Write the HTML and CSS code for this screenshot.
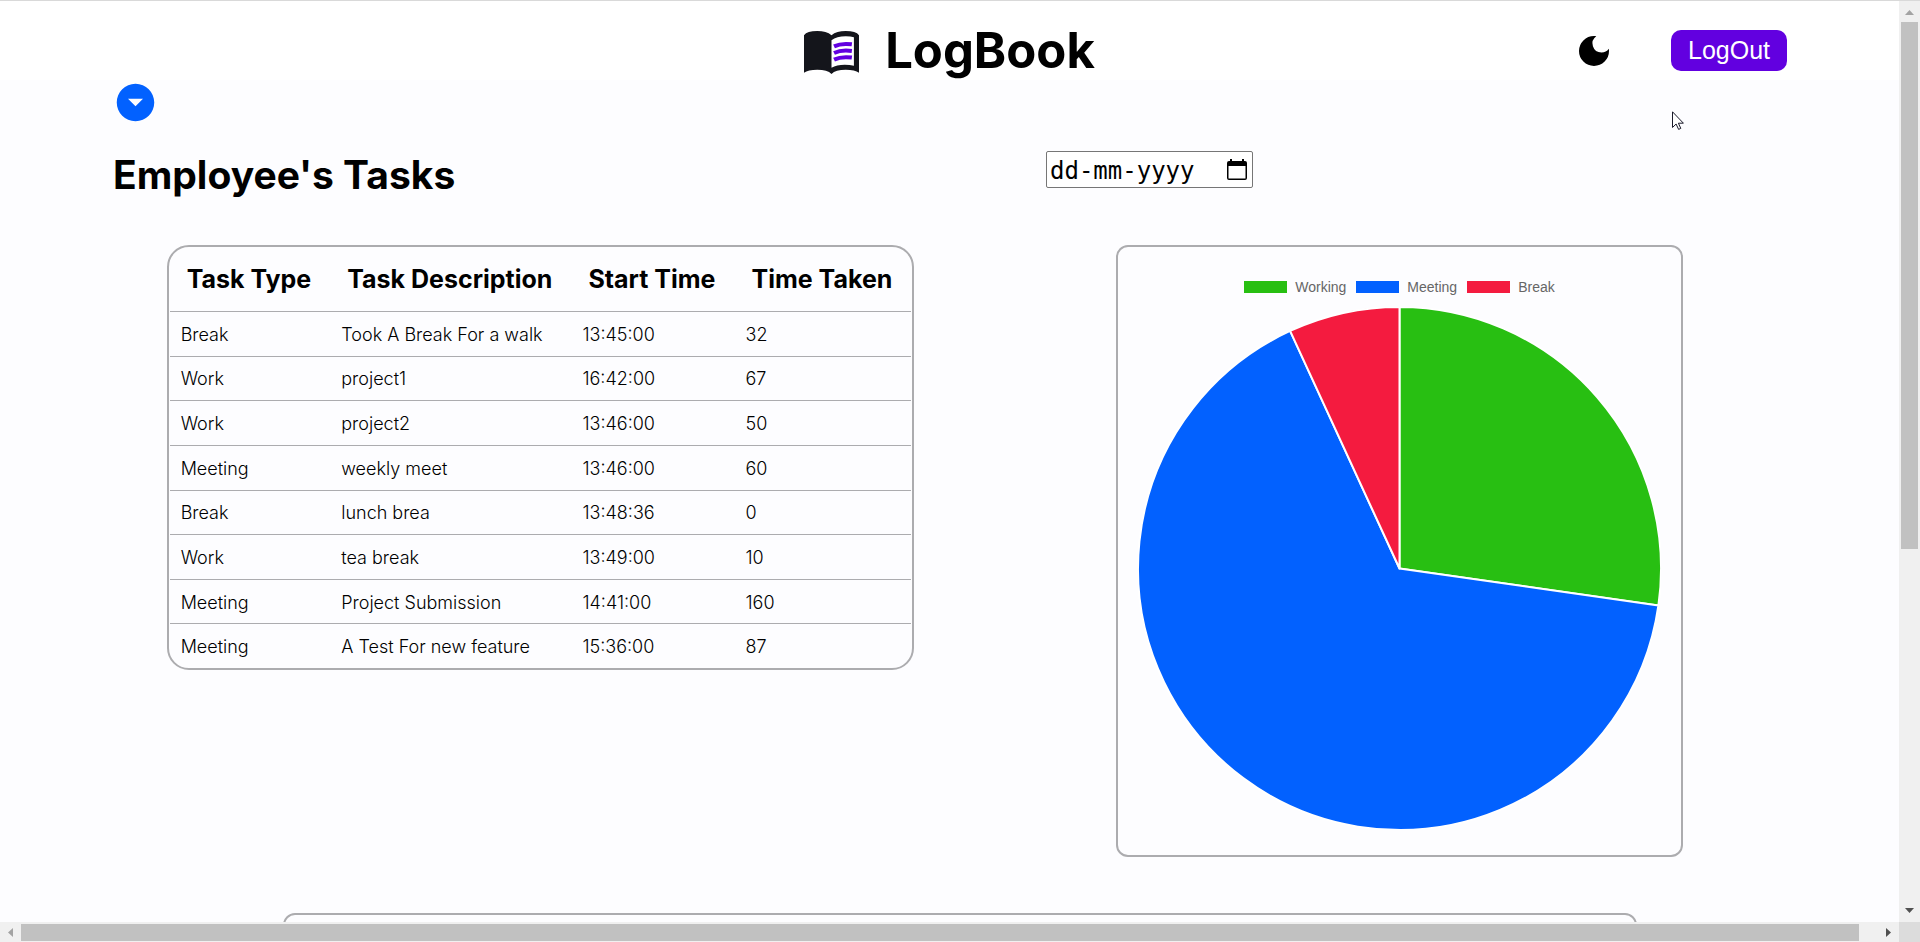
FILE: index.html
```html
<!DOCTYPE html>
<html lang="en">
<head>
<meta charset="utf-8">
<title>LogBook</title>
<link rel="stylesheet" href="styles.css">
</head>
<body>
<div class="window">
  <div class="viewport">
    <header class="topbar">
      <div class="brand">
        <svg class="brand-icon" viewBox="0 0 54 42" aria-hidden="true">
          <path fill="#14151b" d="M0 4Q3 0 13 0q9 0 14 4Q32 0 41 0q10 0 13 4v37Q50 38 41 38q-10 0-14 4-4-4-14-4-9 0-13 3z"/>
          <path fill="#fff" d="M27 9Q32 5 41 5q5 0 8 1v28q-4-1-9-1-8 0-13 3z"/>
          <path fill="none" stroke="#6200e0" stroke-width="4" d="M29.500 15q7-3.400 17.500-2M29.500 21.500q7-3.400 17.500-2M29.500 28q7-3.400 17.500-2"/>
        </svg>
        <h1 class="brand-name">LogBook</h1>
      </div>
      <div class="actions">
        <button class="icon-button" type="button" aria-label="Dark mode">
          <svg class="moon" viewBox="0 0 24 24" aria-hidden="true"><path d="M12 3a9 9 0 1 0 9 9c0-.46-.04-.92-.1-1.360a5.389 5.389 0 0 1-4.400 2.260 5.403 5.403 0 0 1-3.140-9.800c-.44-.06-.9-.1-1.360-.1z"/></svg>
        </button>
        <button class="logout" type="button">LogOut</button>
      </div>
    </header>
    <main class="page">
      <button class="icon-button expand" type="button" aria-label="Expand">
        <svg class="expand-icon" viewBox="0 0 24 24" aria-hidden="true"><path d="M12 2C6.480 2 2 6.480 2 12s4.480 10 10 10 10-4.480 10-10S17.520 2 12 2zm0 12l-4-4h8l-4 4z"/></svg>
      </button>
      <div class="columns title-row">
        <h2 class="title">Employee's Tasks</h2>
        <div class="date-field">
          <input class="date-input" type="text" placeholder="dd-mm-yyyy" aria-label="Date">
          <svg class="calendar" viewBox="0 0 20 21" aria-hidden="true"><path fill-rule="evenodd" d="M2 2h1V0h2v2h10V0h2v2h1q2 0 2 2v15q0 2-2 2H2q-2 0-2-2V4q0-2 2-2zm-.5 5v12.500h17V7z"/></svg>
        </div>
      </div>
      <div class="columns">
        <div class="table-card">
          <table class="tasks">
            <thead><tr><th>Task Type</th><th>Task Description</th><th>Start Time</th><th>Time Taken</th></tr></thead>
            <tbody>
              <tr><td>Break</td><td>Took A Break For a walk</td><td>13:45:00</td><td>32</td></tr>
              <tr><td>Work</td><td>project1</td><td>16:42:00</td><td>67</td></tr>
              <tr><td>Work</td><td>project2</td><td>13:46:00</td><td>50</td></tr>
              <tr><td>Meeting</td><td>weekly meet</td><td>13:46:00</td><td>60</td></tr>
              <tr><td>Break</td><td>lunch brea</td><td>13:48:36</td><td>0</td></tr>
              <tr><td>Work</td><td>tea break</td><td>13:49:00</td><td>10</td></tr>
              <tr><td>Meeting</td><td>Project Submission</td><td>14:41:00</td><td>160</td></tr>
              <tr><td>Meeting</td><td>A Test For new feature</td><td>15:36:00</td><td>87</td></tr>
            </tbody>
          </table>
        </div>
        <div class="chart-card">
          <ul class="legend">
            <li class="legend-item"><span class="swatch working"></span>Working</li>
            <li class="legend-item"><span class="swatch meeting"></span>Meeting</li>
            <li class="legend-item"><span class="swatch break"></span>Break</li>
          </ul>
          <svg class="pie" viewBox="0 0 524 524" role="img" aria-label="Time by task type">
            <g stroke="#fff" stroke-width="2" stroke-linejoin="round">
              <path fill="#28bf12" d="M262 262V0A262 262 0 0 1 521.400 299z"/>
              <path fill="#0261ff" d="M262 262L521.400 299A262 262 0 1 1 152.400 24z"/>
              <path fill="#f41b3f" d="M262 262L152.400 24A262 262 0 0 1 262 0z"/>
            </g>
          </svg>
        </div>
      </div>
      <section class="next-card"></section>
    </main>
  </div>
  <div class="scroll-y" aria-hidden="true">
    <svg class="arrow" viewBox="0 0 9 5"><path fill="#a3a3a3" d="M0 5h9L4.500 0z"/></svg>
    <div class="track-y"><div class="thumb-y"></div></div>
    <svg class="arrow" viewBox="0 0 9 5"><path fill="#505050" d="M0 0h9L4.500 5z"/></svg>
  </div>
  <div class="scroll-x" aria-hidden="true">
    <svg class="arrow-x" viewBox="0 0 5 9"><path fill="#a3a3a3" d="M5 0v9L0 4.500z"/></svg>
    <div class="track-x"><div class="thumb-x"></div></div>
    <svg class="arrow-x" viewBox="0 0 5 9"><path fill="#505050" d="M0 0v9l5-4.500z"/></svg>
  </div>
  <div class="corner"></div>
</div>
<svg class="pointer" viewBox="0 0 12 19" aria-hidden="true"><path fill="#fff" stroke="#1a1a2a" d="M.5.8v15.700l3.600-3.500 2.500 5.400 2.200-1-2.400-5.200h5z"/></svg>
</body>
</html>
```
FILE: styles.css
```css
* { box-sizing: border-box; }
body {
  margin: 0;
  font-family: Inter, "Liberation Sans", sans-serif;
  color: #000;
  overflow: hidden;
}
h1, h2, ul { margin: 0; padding: 0; }
button { font: inherit; border: 0; padding: 0; cursor: pointer; }
svg { display: block; }

.window {
  display: grid;
  grid-template-columns: minmax(0, 1fr) 21px;
  grid-template-rows: minmax(0, 1fr) 20px;
  height: 100vh;
  border-top: 1px solid #d9d9d9;
}
.viewport { overflow: hidden; background: #fdfdff; }

.topbar {
  display: grid;
  grid-template-columns: 1fr auto 1fr;
  align-items: center;
  padding: 20px 112px 0;
  background: #fff;
}
.brand { grid-column: 2; display: flex; align-items: center; gap: 26px; }
.brand-icon { width: 55px; height: 43px; margin-top: 4px; }
.brand-name { font-size: 49px; line-height: 59px; font-weight: 700; }
.actions {
  display: flex;
  align-items: center;
  justify-content: flex-end;
  gap: 57px;
}
.icon-button { background: none; }
.moon { width: 40px; height: 40px; }
.logout {
  padding: 6px 17px;
  border-radius: 10px;
  background: #6200e0;
  color: #fff;
  font-family: "Liberation Sans", Arial, sans-serif;
  font-size: 25px;
  line-height: 29px;
}

.expand { display: block; margin-left: 113px; }
.expand-icon { width: 45px; height: 45px; fill: #0261ff; }
.columns {
  display: grid;
  grid-template-columns: 855fr 707fr;
  column-gap: 78px;
  align-items: start;
  justify-items: center;
  padding: 0 146px 0 113px;
}
.title-row { justify-items: start; padding-top: 26px; padding-bottom: 46px; }
.title { font-size: 39px; line-height: 48px; font-weight: 700; }
.date-field {
  display: flex;
  align-items: center;
  width: 207px;
  padding: 0 5px 0 3px;
  background: #fff;
  border: 1px solid #767676;
  border-radius: 2px;
}
.date-input {
  flex: 1;
  min-width: 0;
  border: 0;
  padding: 2px 0 0;
  background: none;
  font-family: "DejaVu Sans Mono", monospace;
  font-size: 24px;
  line-height: 33px;
  height: 35px;
}
.date-input::placeholder { color: #000; opacity: 1; }
.calendar { width: 20px; height: 21px; }

.table-card { padding: 0 1px; border: 2px solid #acacaf; border-radius: 22px; }
.tasks { height: 421px; border-collapse: separate; border-spacing: 0; text-align: left; }
.tasks th {
  height: 65px;
  padding: 0 19px 0 17px;
  font-size: 25px;
  line-height: 30px;
  font-weight: 700;
  border-bottom: 1px solid #acacaf;
}
.tasks td {
  padding: 11px 11px 9px;
  font-size: 18px;
  line-height: 22px;
  font-weight: 300;
  border-bottom: 1px solid #acacaf;
}
.tasks tbody tr:last-child td { border-bottom: 0; }

.chart-card {
  width: 567px;
  max-width: 100%;
  padding: 32px 20px 25px;
  border: 2px solid #acacaf;
  border-radius: 12px;
}
.legend {
  display: flex;
  justify-content: center;
  gap: 10px;
  margin-bottom: 12px;
  list-style: none;
  font-family: "Liberation Sans", Arial, sans-serif;
  font-size: 14px;
  line-height: 16px;
  color: #666;
}
.legend-item { display: flex; align-items: center; gap: 8px; }
.swatch { width: 43px; height: 12px; }
.working { background: #28bf12; }
.meeting { background: #0261ff; }
.break { background: #f41b3f; }
.pie { width: 100%; }

.next-card {
  height: 300px;
  margin: 56px 262px 0 283px;
  border: 2px solid #acacaf;
  border-radius: 12px;
}

.scroll-y {
  display: flex;
  flex-direction: column;
  align-items: center;
  gap: 7px;
  padding: 9px 0 9px;
  background: #f0f0f0;
}
.arrow { width: 9px; height: 5px; }
.track-y { flex: 1; width: 17px; }
.thumb-y { height: 60%; background: #c1c1c1; }
.scroll-x {
  display: flex;
  align-items: center;
  gap: 8px;
  padding: 0 8px;
  background: #f0f0f0;
}
.arrow-x { width: 5px; height: 9px; }
.track-x { flex: 1; height: 17px; }
.thumb-x { width: 99%; height: 100%; background: #c1c1c1; }
.corner { background: #dcdcdc; }

.pointer { position: absolute; left: 1672px; top: 111px; width: 12px; height: 19px; }
```
